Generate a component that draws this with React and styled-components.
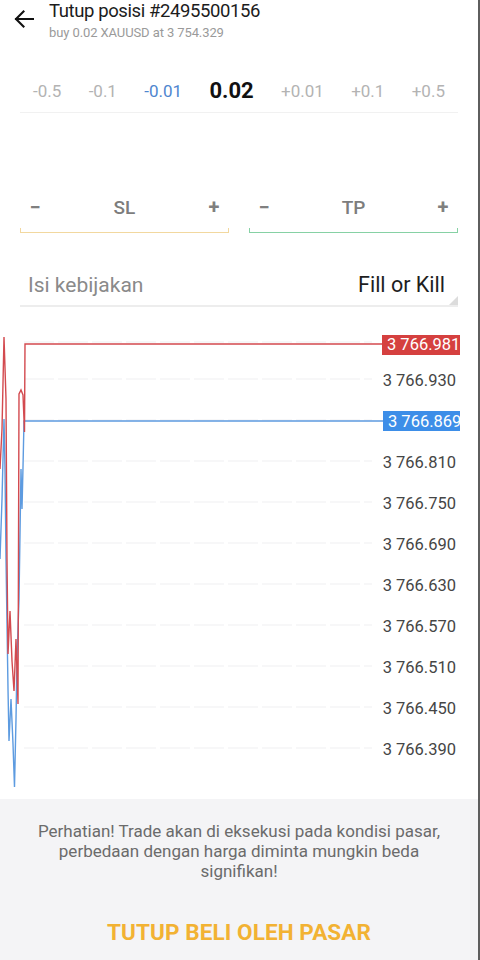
import React from "react";
import styled, { createGlobalStyle } from "styled-components";

const Global = createGlobalStyle`
  html, body { margin: 0; padding: 0; background: #fff; }
  body { font-family: Roboto, "Noto Sans", "Liberation Sans", sans-serif; }
  * { box-sizing: border-box; }
`;

const Page = styled.div`
  width: 480px;
  height: 960px;
  border-right: 2px solid #5e5e5e;
  background: #fff;
  display: flex;
  flex-direction: column;
  overflow: hidden;
`;

const Header = styled.header`
  height: 69px;
  display: flex;
  align-items: flex-start;
`;

const BackButton = styled.div`
  width: 49px;
  height: 40px;
  display: flex;
  padding: 10px 0 0 14px;
`;

const TitleBlock = styled.div`
  display: flex;
  flex-direction: column;
  padding-top: 1px;
`;

const Title = styled.span`
  font-size: 18.5px;
  line-height: 20px;
  letter-spacing: -0.4px;
  color: #1c1c1c;
  white-space: nowrap;
`;

const Subtitle = styled.span`
  margin-top: 4px;
  font-size: 13px;
  line-height: 16px;
  letter-spacing: -0.1px;
  color: #9a9a9a;
  white-space: nowrap;
`;

const LotRow = styled.div`
  height: 44px;
  margin: 0 20px;
  padding: 0 13px 0 13px;
  display: flex;
  align-items: center;
  justify-content: space-between;
  border-bottom: 1px solid #f1f1f1;
`;

const Lot = styled.span`
  font-size: ${(p) => (p.$current ? "22px" : "17px")};
  font-weight: ${(p) => (p.$current ? 700 : 400)};
  color: ${(p) => (p.$current ? "#111" : p.$active ? "#4f86cf" : "#b3b3b3")};
`;

const LimitRow = styled.div`
  margin: 82px 20px 0;
  display: grid;
  grid-template-columns: 1fr 1fr;
  column-gap: 20px;
`;

const LimitBox = styled.div`
  display: flex;
  flex-direction: column;
`;

const LimitControls = styled.div`
  height: 24px;
  display: flex;
  align-items: center;
  justify-content: space-between;
  padding: 0 9px;
  color: #7d7d7d;
  font-size: 19px;
  font-weight: 500;
`;

const Step = styled.span`
  font-size: 20px;
  font-weight: 700;
  color: #808080;
  width: 12px;
  text-align: center;
`;

const Bracket = styled.div`
  margin-top: 9px;
  height: 5px;
  border: 1.5px solid ${(p) => p.$color};
  border-top: none;
`;

const FillRow = styled.div`
  position: relative;
  margin: 36px 20px 0;
  height: 38px;
  padding: 0 13px 5px 8px;
  display: flex;
  align-items: center;
  justify-content: space-between;
  border-bottom: 2px solid #ededed;
  &::after {
    content: "";
    position: absolute;
    right: 0;
    bottom: 0;
    border-style: solid;
    border-width: 0 0 9px 9px;
    border-color: transparent transparent #dcdcdc transparent;
  }
`;

const FillLabel = styled.span`
  font-size: 21px;
  color: #8a8a8a;
`;

const FillValue = styled.span`
  font-size: 21.5px;
  color: #1e1e1e;
`;

const Chart = styled.div`
  position: relative;
  margin-top: 13px;
  height: 479px;
  display: grid;
`;

const ChartLayer = styled.svg`
  grid-area: 1 / 1;
  display: block;
`;

const Scale = styled.div`
  grid-area: 1 / 1;
  justify-self: end;
  padding: 39.5px 22px 0 0;
  display: flex;
  flex-direction: column;
`;

const Tick = styled.div`
  height: 41px;
  display: flex;
  align-items: center;
  font-size: 16.5px;
  color: #454545;
  visibility: ${(p) => (p.$hidden ? "hidden" : "visible")};
`;

const Badge = styled.div`
  position: absolute;
  left: ${(p) => p.$left}px;
  width: ${(p) => 460 - p.$left}px;
  height: 20px;
  padding-left: 5px;
  display: flex;
  align-items: center;
  overflow: hidden;
  white-space: nowrap;
  font-size: 16.5px;
  color: #fff;
  background: ${(p) => p.$bg};
`;

const Footer = styled.footer`
  flex: 1;
  background: #f4f4f6;
  display: flex;
  flex-direction: column;
  align-items: center;
  padding: 22px 30px 0 30px;
`;

const Warning = styled.p`
  margin: 0;
  font-size: 17px;
  line-height: 20px;
  color: #6b6b6b;
  text-align: center;
`;

const CloseButton = styled.div`
  margin-top: 36px;
  line-height: 30px;
  font-size: 22.5px;
  font-weight: 700;
  color: #f2b233;
  letter-spacing: 0.1px;
`;

const lots = ["-0.5", "-0.1", "-0.01", "0.02", "+0.01", "+0.1", "+0.5"];
const ticks = [
  "3 766.930",
  "3 766.870",
  "3 766.810",
  "3 766.750",
  "3 766.690",
  "3 766.630",
  "3 766.570",
  "3 766.510",
  "3 766.450",
  "3 766.390",
];

// chart y offset: page y 321 -> 0
const priceY = (p) => 59.5 + ((766.93 - p) / 0.06) * 41;

export default function App() {
  const o = 321;
  const redD = [
    [0, 470], [2, 430], [4, 338], [6, 400], [7, 560], [8, 655], [10, 612],
    [12, 662], [14, 692], [16, 640], [18, 705], [19, 395], [21, 391],
    [23, 396], [24.5, 433], [25, 345], [382, 345],
  ]
    .map(([x, y], i) => `${i ? "L" : "M"}${x} ${y - o}`)
    .join(" ");
  const blueD = [
    [0, 560], [2, 500], [4, 420], [5, 470], [6, 560], [8, 690], [9, 742],
    [11, 700], [13, 745], [14.5, 788], [16, 720], [17, 660], [19, 600],
    [21, 470], [22, 510], [23, 468], [24, 422], [383, 422],
  ]
    .map(([x, y], i) => `${i ? "L" : "M"}${x} ${y - o}`)
    .join(" ");
  const grid = [343, 380, 421, 462, 503, 544, 585, 626, 667, 708, 749];

  return (
    <>
      <Global />
      <Page>
        <Header>
          <BackButton>
            <svg width="20" height="18" viewBox="0 0 20 18" fill="none">
              <path
                d="M19 9H2M9.5 1.5L2 9l7.5 7.5"
                stroke="#111"
                strokeWidth="2.1"
                strokeLinecap="square"
              />
            </svg>
          </BackButton>
          <TitleBlock>
            <Title>Tutup posisi #2495500156</Title>
            <Subtitle>buy 0.02 XAUUSD at 3 754.329</Subtitle>
          </TitleBlock>
        </Header>

        <LotRow>
          {lots.map((l) => (
            <Lot key={l} $current={l === "0.02"} $active={l === "-0.01"}>
              {l}
            </Lot>
          ))}
        </LotRow>

        <LimitRow>
          <LimitBox>
            <LimitControls>
              <Step>−</Step>
              <span>SL</span>
              <Step>+</Step>
            </LimitControls>
            <Bracket $color="#f2d89f" />
          </LimitBox>
          <LimitBox>
            <LimitControls>
              <Step>−</Step>
              <span>TP</span>
              <Step>+</Step>
            </LimitControls>
            <Bracket $color="#86d1a4" />
          </LimitBox>
        </LimitRow>

        <FillRow>
          <FillLabel>Isi kebijakan</FillLabel>
          <FillValue>Fill or Kill</FillValue>
        </FillRow>

        <Chart>
          <ChartLayer width="478" height="479" viewBox="0 0 478 479">
            {grid.map((y) => (
              <line
                key={y}
                x1="24"
                x2="372"
                y1={y - o}
                y2={y - o}
                stroke="#efeff2"
                strokeWidth="1.2"
                strokeDasharray="30 4"
              />
            ))}
            <path d={blueD} stroke="#5d9be0" strokeWidth="1.4" fill="none" />
            <path d={redD} stroke="#d34a4f" strokeWidth="1.4" fill="none" />
          </ChartLayer>
          <Scale>
            {ticks.map((t) => (
              <Tick key={t} $hidden={t === "3 766.870"}>
                {t}
              </Tick>
            ))}
          </Scale>
          <Badge
            $left={382}
            $bg="#d5403f"
            style={{ top: priceY(766.981) - 10 }}
          >
            3 766.981
          </Badge>
          <Badge
            $left={383}
            $bg="#3d8ee8"
            style={{ top: priceY(766.869) - 10 }}
          >
            3 766.869
          </Badge>
        </Chart>

        <Footer>
          <Warning>
            Perhatian! Trade akan di eksekusi pada kondisi pasar, perbedaan
            dengan harga diminta mungkin beda signifikan!
          </Warning>
          <CloseButton>TUTUP BELI OLEH PASAR</CloseButton>
        </Footer>
      </Page>
    </>
  );
}
